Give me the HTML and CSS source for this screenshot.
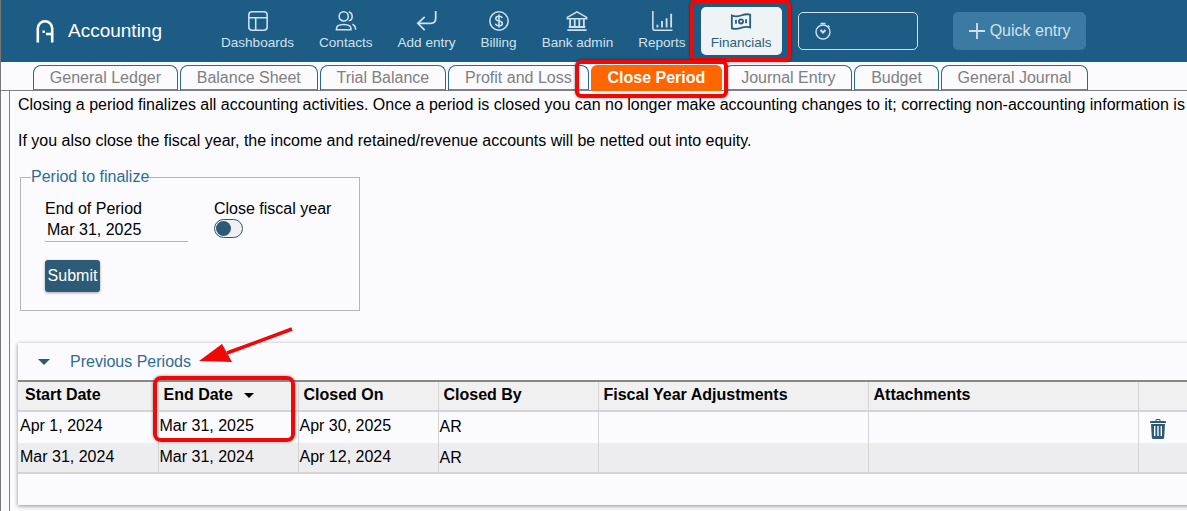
FILE: index.html
```html
<!DOCTYPE html>
<html lang="en">
<head>
<meta charset="utf-8">
<title>Accounting</title>
<link rel="stylesheet" href="styles.css">
</head>
<body>
<div class="page">
  <header class="topbar">
    <div class="brand">
      <svg class="logo" width="18" height="24" viewBox="0 0 18 24" fill="none" stroke="#fff" stroke-width="2.6"><path d="M1.800 23.500V9.500a7.200 7.200 0 0 1 14.400 0v14"/><path d="M10 15h6.200"/><rect x="6.500" y="11.500" width="2.400" height="2.400" fill="#fff" stroke="none"/></svg>
      <span class="brand-name">Accounting</span>
    </div>
    <nav class="nav">
      <a class="nav-item">
        <svg width="24" height="24" viewBox="0 0 24 24" fill="none" stroke="currentColor" stroke-width="1.7"><rect x="2" y="2" width="20" height="20" rx="3.500"/><path d="M2 8.500h20M9.500 8.500V22"/></svg>
        <span>Dashboards</span>
      </a>
      <a class="nav-item">
        <svg width="24" height="24" viewBox="0 0 24 24" fill="none" stroke="currentColor" stroke-width="1.7"><circle cx="9.500" cy="7" r="5"/><path d="M1.500 21.500c0-2.500 0-3 1.500-4.200 1.500-1.100 4-1.500 6.500-1.500s5 .4 6.500 1.500c1.500 1.200 1.500 2.500 1.500 4.200z"/><path d="M15 2.200c2.500.5 3.700 2.500 3.700 4.800s-1.200 4.300-3.700 4.800M19 15.500c2.500 1 3.500 3 3.500 6"/></svg>
        <span>Contacts</span>
      </a>
      <a class="nav-item">
        <svg width="24" height="24" viewBox="0 0 24 24" fill="none" stroke="currentColor" stroke-width="1.900"><path d="M21.500 1v8c0 3.500-2 5.500-5.500 5.500H2"/><path d="M9.500 7.500 2 14.500l7.500 7.500"/></svg>
        <span>Add entry</span>
      </a>
      <a class="nav-item">
        <svg width="24" height="24" viewBox="0 0 24 24" fill="none" stroke="currentColor" stroke-width="1.700"><circle cx="12" cy="12" r="10"/><path d="M15.500 8.800c-.4-1.400-1.800-2-3.500-2-2 0-3.500 1-3.500 2.600 0 3.700 7.200 1.500 7.200 5.200 0 1.700-1.600 2.600-3.700 2.600-1.900 0-3.400-.8-3.800-2.300M12 5v14"/></svg>
        <span>Billing</span>
      </a>
      <a class="nav-item">
        <svg width="24" height="24" viewBox="0 0 24 24" fill="none" stroke="currentColor" stroke-width="1.700"><path d="M1.500 8 12 2l10.500 6v1.500h-21z"/><path d="M4.500 10v8M9.500 10v8M14.500 10v8M19.500 10v8M3 18.500h18M1.500 22h21" stroke-width="2"/></svg>
        <span>Bank admin</span>
      </a>
      <a class="nav-item">
        <svg width="24" height="24" viewBox="0 0 24 24" fill="none" stroke="currentColor" stroke-width="1.700"><path d="M2 1v18.500c0 1.500.7 2.500 2.500 2.500h19"/><path d="M7 19v-3M12 19v-7M17 19V9M22 19V4" stroke-width="2"/></svg>
        <span>Reports</span>
      </a>
      <a class="nav-item active">
        <svg width="24" height="24" viewBox="0 0 24 24" fill="none" stroke="currentColor" stroke-width="2"><path d="M2 6c3.500 1.500 7 1 10 0s6.500-2 10-1v14c-3.500-1.200-7-.5-10 .5s-6.500 1.500-10 .5z"/><circle cx="12" cy="12.500" r="2.200"/><path d="M6.500 10.500v4.500M17.500 10v4.500"/></svg>
        <span>Financials</span>
      </a>
    </nav>
    <div class="timer">
      <svg width="18" height="18" viewBox="0 0 18 18" fill="none" stroke="currentColor" stroke-width="1.400"><circle cx="9" cy="10" r="7"/><path d="M6.500 1.500h5M14 3.500l1.500 1.500"/><path d="M6.500 8 9 10.500 11.500 8" stroke-width="2"/></svg>
    </div>
    <button class="quick" type="button">
      <svg width="18" height="18" viewBox="0 0 18 18" fill="none" stroke="currentColor" stroke-width="1.800"><path d="M9 1v16M1 9h16"/></svg>
      Quick entry
    </button>
  </header>

  <div class="tabs">
    <a class="tab">General Ledger</a>
    <a class="tab">Balance Sheet</a>
    <a class="tab">Trial Balance</a>
    <a class="tab">Profit and Loss</a>
    <a class="tab selected">Close Period</a>
    <a class="tab">Journal Entry</a>
    <a class="tab">Budget</a>
    <a class="tab">General Journal</a>
  </div>

  <main class="content">
    <p class="intro">Closing a period finalizes all accounting activities. Once a period is closed you can no longer make accounting changes to it; correcting non-accounting information is</p>
    <p class="intro second">If you also close the fiscal year, the income and retained/revenue accounts will be netted out into equity.</p>

    <fieldset class="period">
      <legend>Period to finalize</legend>
      <div class="fields">
        <div class="field">
          <label>End of Period</label>
          <div class="date-input">Mar 31, 2025</div>
        </div>
        <div class="field">
          <label>Close fiscal year</label>
          <span class="toggle"><span class="knob"></span></span>
        </div>
      </div>
      <button class="submit" type="button">Submit</button>
    </fieldset>

    <section class="panel">
      <div class="panel-head">
        <span class="caret"></span>
        <span class="panel-title">Previous Periods</span>
      </div>
      <table class="grid">
        <colgroup>
          <col class="c140"><col class="c140"><col class="c140"><col class="c160"><col class="c270"><col class="c270"><col class="c60">
        </colgroup>
        <thead>
          <tr>
            <th>Start Date</th>
            <th>End Date <span class="sort"></span></th>
            <th>Closed On</th>
            <th>Closed By</th>
            <th>Fiscal Year Adjustments</th>
            <th>Attachments</th>
            <th></th>
          </tr>
        </thead>
        <tbody>
          <tr>
            <td>Apr 1, 2024</td><td>Mar 31, 2025</td><td>Apr 30, 2025</td><td class="by">AR</td><td></td><td></td>
            <td class="act"><svg width="16" height="20" viewBox="0 0 16 20" fill="#2d5b75"><path d="M5.500 2V1.200C5.500.5 6 0 6.700 0h2.600c.7 0 1.200.5 1.200 1.200V2H15a1 1 0 0 1 1 1v1H0V3a1 1 0 0 1 1-1zm1 0h3v-1h-3z"/><path fill-rule="evenodd" d="M1 5h14l-.8 13.500c0 .9-.7 1.500-1.500 1.500H3.300c-.8 0-1.500-.6-1.500-1.500zm3 2v10h1.400V7zm3.300 0v10h1.400V7zm3.300 0v10H12V7z"/></svg></td>
          </tr>
          <tr class="alt">
            <td>Mar 31, 2024</td><td>Mar 31, 2024</td><td>Apr 12, 2024</td><td class="by">AR</td><td></td><td></td><td></td>
          </tr>
        </tbody>
      </table>
    </section>
  </main>

  <div class="mark mark-fin"></div>
  <div class="mark mark-close"></div>
  <div class="mark mark-end"></div>
  <svg class="arrow" width="100" height="40" viewBox="0 0 100 40"><path d="M93 2 28 26" stroke="#f00806" stroke-width="3.500" fill="none"/><path d="M0 34 23 17l10 18z" fill="#f00806"/></svg>
</div>
</body>
</html>
```
FILE: styles.css
```css
* { box-sizing: border-box; }
html, body { margin: 0; height: 100%; overflow: hidden; }
body {
  background: #fbfbff;
  color: #000;
  font: 16px "Liberation Sans", Arial, sans-serif;
}
.page {
  position: relative;
  width: 1187px;
  height: 511px;
  overflow: hidden;
  border-left: 1px solid #777;
}
.topbar {
  display: flex;
  align-items: center;
  height: 62px;
  background: #1c5c85;
  padding-left: 35px;
  margin-left: -1px;
  border-left: 1px solid #2a4a5e;
}
.brand { display: flex; align-items: center; width: 175px; }
.logo { flex: none; margin-top: -1px; }
.brand-name { margin-left: 14px; color: #fff; font-size: 19px; }
.nav { display: flex; gap: 5px; align-items: center; }
.nav-item {
  display: flex;
  flex-direction: column;
  align-items: center;
  gap: 2px;
  height: 48px;
  padding: 3px 10px 0;
  color: #cfe2ee;
  font-size: 13.550px;
  border-radius: 5px;
}
.nav-item svg { display: block; width: 22px; height: 22px; }
.nav-item span { line-height: 18px; white-space: nowrap; }
.nav-item.active { background: #eef3f6; color: #2b5f80; }
.timer {
  display: flex;
  align-items: center;
  width: 120px;
  height: 38px;
  margin-left: 16px;
  padding-left: 15px;
  border: 1px solid #cfe2ee;
  border-radius: 5px;
  color: #cfe2ee;
}
.quick {
  display: flex;
  align-items: center;
  gap: 4px;
  width: 133px;
  height: 38px;
  margin-left: 35px;
  padding: 0 0 0 15px;
  border: 0;
  border-radius: 5px;
  background: #3b7aa3;
  color: #cfe2ee;
  font: 16px "Liberation Sans", Arial, sans-serif;
}
.tabs {
  display: flex;
  gap: 2px;
  height: 26px;
  margin-top: 3px;
  padding-left: 32px;
  border-bottom: 1px solid #808080;
}
.tab {
  height: 26px;
  padding: 2px 15.850px 0;
  border: 1px solid #2b6a8e;
  border-bottom: 2px solid #808080;
  border-radius: 8px 8px 0 0;
  color: #808080;
  font-size: 16px;
  line-height: 20px;
  white-space: nowrap;
}
.tab.selected {
  border: 0;
  padding: 3px 17px 0;
  border-radius: 6px 6px 0 0;
  background: #ff6600;
  color: #fff;
  font-weight: bold;
}
.content {
  margin-left: 8px;
  padding: 5px 0 0 8px;
  height: 424px;
  border-left: 1px solid #808080;
}
.intro { margin: 0; white-space: nowrap; line-height: 18px; }
.second { margin-top: 18px; }
.period {
  display: block;
  width: 340px;
  height: 143px;
  margin: 18px 0 0 2px;
  padding: 0 0 0 24px;
  border: 1px solid #b5b5b8;
}
.period legend {
  margin-left: -14px;
  padding: 0;
  color: #2f6d8f;
  font-size: 16px;
  line-height: 18px;
}
.fields { display: flex; margin-top: 14px; }
.field { display: flex; flex-direction: column; }
.field:first-child { width: 169px; }
.field label { line-height: 18px; }
.date-input {
  width: 143px;
  height: 24px;
  padding: 3px 0 0 2px;
  border-bottom: 1px solid #b5b5b8;
  line-height: 18px;
}
.toggle {
  display: block;
  position: relative;
  width: 29px;
  height: 19px;
  margin-top: 1px;
  border: 1px solid #2d5b75;
  border-radius: 10px;
  background: #f0f0f0;
}
.knob {
  display: block;
  width: 15px;
  height: 15px;
  margin: 1px;
  border-radius: 50%;
  background: #2d5b75;
}
.submit {
  display: block;
  width: 55px;
  height: 32px;
  margin-top: 18px;
  padding: 0;
  border: 0;
  border-radius: 3px;
  background: #2d5b75;
  color: #fff;
  font: 16px "Liberation Sans", Arial, sans-serif;
  box-shadow: 0 1px 3px rgba(0,0,0,.35);
}
.panel {
  width: 1200px;
  height: 162px;
  margin-top: 32px;
  box-shadow: 0 1px 4px rgba(0,0,0,.45);
}
.panel-head {
  display: flex;
  align-items: center;
  height: 37px;
  padding-left: 20px;
}
.caret {
  width: 0;
  height: 0;
  border: 6px solid transparent;
  border-top: 6px solid #2d5b75;
  border-bottom: 0;
}
.panel-title { margin-left: 20px; color: #2f6d8f; }
.grid {
  width: 1180px;
  table-layout: fixed;
  border-collapse: collapse;
  border-top: 2px solid #888;
}
.c140 { width: 140px; }
.c160 { width: 160px; }
.c270 { width: 270px; }
.c60 { width: 60px; }
.grid th {
  height: 30px;
  padding: 0 0 2px 5px;
  background: #f0f0f0;
  border-right: 1px solid #d4d4d4;
  border-bottom: 2px solid #d4d4d4;
  text-align: left;
  font-weight: bold;
}
.grid th:first-child { padding-left: 7px; }
.grid td {
  height: 32px;
  padding: 0 0 3px 1px;
  border-right: 1px solid #d4d4d4;
  white-space: nowrap;
}
.grid td:first-child { padding-left: 2px; }
.grid td.by { padding-bottom: 2px; }
.grid tr.alt td { height: 30px; padding-bottom: 1px; background: #ededf0; border-bottom: 2px solid #d4d4d4; }
.grid tr.alt td.by { padding-bottom: 0; }
.grid td.act { padding: 3px 0 0 11px; }
.act svg { display: block; }
.sort {
  display: inline-block;
  width: 0;
  height: 0;
  margin: 0 0 2px 7px;
  border: 5px solid transparent;
  border-top: 5px solid #000;
  border-bottom: 0;
}
.mark {
  position: absolute;
  border: 4px solid #f00806;
  box-shadow: 0 0 3px rgba(0,0,0,.45);
}
.mark-fin { left: 689px; top: -1px; width: 101px; height: 63px; border-radius: 6px; }
.mark-close { left: 574px; top: 60px; width: 153px; height: 38px; border-radius: 6px; }
.mark-end { left: 152px; top: 376px; width: 142px; height: 66px; border-radius: 8px; }
.arrow { position: absolute; left: 198px; top: 327px; }
```
